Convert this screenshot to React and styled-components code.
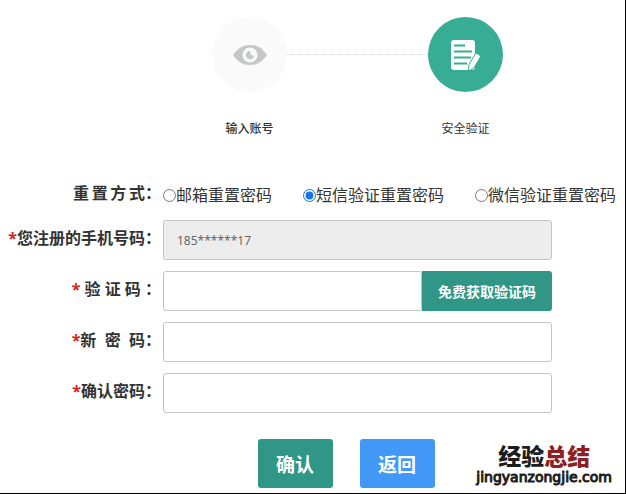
import React, { useState } from "react";
import styled, { createGlobalStyle } from "styled-components";

const GlobalStyle = createGlobalStyle`
  *, *::before, *::after { box-sizing: border-box; }
  body {
    margin: 0;
    background: #fff;
    color: #333;
    font-family: "Noto Sans", "Noto Sans CJK SC", sans-serif;
  }
  button, input { font-family: inherit; }
`;

const Page = styled.main`
  position: relative;
  display: flex;
  flex-direction: column;
  min-height: 100vh;
  padding-top: 17px;
  border-right: 1px solid #000;
  border-bottom: 1px solid #000;
`;

const Steps = styled.ol`
  display: flex;
  align-items: flex-start;
  justify-content: center;
  list-style: none;
  margin: 0;
  padding: 0 122px 0 212px;
`;

const Step = styled.li`
  display: flex;
  flex: none;
  flex-direction: column;
  align-items: center;
  gap: 27px;
  width: 75px;
`;

const StepCircle = styled.span`
  display: grid;
  place-items: center;
  width: 75px;
  height: 75px;
  border-radius: 50%;
  background: ${(p) => (p.$active ? "#38ad95" : "#fafafa")};
`;

const StepLabel = styled.span`
  font-size: 12px;
  line-height: 20px;
  white-space: nowrap;
  font-weight: ${(p) => (p.$strong ? 500 : 400)};
`;

const Connector = styled.li`
  flex: 1;
  height: 38px;
  border-bottom: 1px dotted #dcdcdc;
`;

const Form = styled.form`
  display: flex;
  flex-direction: column;
  gap: 11px;
  margin-top: 42px;
`;

const Row = styled.div`
  display: grid;
  grid-template-columns: 163px minmax(0, 1fr);
  align-items: center;
  padding-right: ${(p) => (p.$wide ? "0" : "73px")};
`;

const Label = styled.label`
  justify-self: end;
  padding: 0 2px 4px 0;
  font-size: 16px;
  line-height: 24px;
  font-weight: 700;
  white-space: pre;
`;

const Star = styled.span`
  color: #e02020;
`;

const Radios = styled.div`
  display: flex;
  align-items: center;
  gap: 31px;
  height: 28px;
`;

const RadioLabel = styled.label`
  display: flex;
  align-items: center;
  font-size: 16px;
  line-height: 28px;
  white-space: nowrap;
`;

const Radio = styled.input`
  flex: none;
  width: 13px;
  height: 13px;
  margin: 0;
  accent-color: #1a73e8;
`;

const TextInput = styled.input`
  width: 100%;
  min-width: 0;
  height: 40px;
  padding: 0 13px;
  border: 1px solid #c4c4c4;
  border-radius: 3px;
  background: ${(p) => (p.readOnly ? "#ededed" : "#fff")};
  color: #666;
  font-size: 12px;
  outline: none;
`;

const CodeGroup = styled.div`
  display: flex;
`;

const CodeButton = styled.button`
  flex: none;
  width: 130px;
  height: 40px;
  padding: 0;
  border: 0;
  border-radius: 0 3px 3px 0;
  background: #309685;
  color: #fff;
  font-size: 14px;
  font-weight: 700;
`;

const Actions = styled.div`
  display: flex;
  justify-content: center;
  gap: 27px;
  margin-top: 15px;
  padding: 0 73px 0 140px;
`;

const ActionButton = styled.button`
  width: 75px;
  height: 49px;
  padding: 0;
  border: 0;
  border-radius: 3px;
  background: ${(p) => (p.$secondary ? "#4298f7" : "#309685")};
  color: #fff;
  font-size: 19px;
  font-weight: 700;
`;

const Watermark = styled.div`
  position: absolute;
  right: 13px;
  bottom: 8px;
  display: flex;
  flex-direction: column;
  align-items: center;
  gap: 1px;
  color: #1d1d1d;
  font-weight: 900;
`;

const WatermarkName = styled.span`
  font-size: 23px;
  line-height: 24px;
`;

const WatermarkAccent = styled.span`
  color: #8d2023;
`;

const WatermarkSite = styled.span`
  font-family: "DejaVu Sans", sans-serif;
  font-size: 14px;
  line-height: 16px;
  font-weight: 400;
  -webkit-text-stroke: 1px currentColor;
`;

const EyeIcon = () => (
  <svg width="34" height="20" viewBox="0 0 34 20" aria-hidden="true">
    <path d="M0 10C5 3 10 0 17 0s12 3 17 10c-5 7-10 10-17 10S5 17 0 10Z" fill="#c4c7ca" />
    <circle cx="17" cy="10" r="7.500" fill="#fafafa" />
    <path d="M17.500 6a4.200 4.200 0 1 0 3.700 4.500A3.200 3.200 0 0 1 17.500 6Z" fill="#c4c7ca" />
  </svg>
);

const NoteIcon = () => (
  <svg width="30" height="30" viewBox="0 0 30 30" aria-hidden="true">
    <rect width="24" height="30" rx="3" fill="#fff" />
    <path d="M3 5.500h11M3 11.500h18M3 17.500h17M3 23.500h13" stroke="#38ad95" strokeWidth="2" />
    <path
      d="M25 13l5 3-7.500 12.500L17.500 31l.5-6.500Z"
      fill="#fff"
      stroke="#38ad95"
      strokeWidth="1"
      strokeLinejoin="round"
    />
  </svg>
);

const METHODS = [
  { id: "email", text: "邮箱重置密码" },
  { id: "sms", text: "短信验证重置密码" },
  { id: "wechat", text: "微信验证重置密码" },
];

export default function App() {
  const [method, setMethod] = useState("sms");

  return (
    <Page>
      <GlobalStyle />
      <Steps>
        <Step>
          <StepCircle>
            <EyeIcon />
          </StepCircle>
          <StepLabel $strong>输入账号</StepLabel>
        </Step>
        <Connector aria-hidden="true" />
        <Step aria-current="step">
          <StepCircle $active>
            <NoteIcon />
          </StepCircle>
          <StepLabel>安全验证</StepLabel>
        </Step>
      </Steps>

      <Form onSubmit={(e) => e.preventDefault()}>
        <Row $wide>
          <Label as="span" id="method-label">
            {"重\u2009置\u2009方\u2009式："}
          </Label>
          <Radios role="radiogroup" aria-labelledby="method-label">
            {METHODS.map((m) => (
              <RadioLabel key={m.id}>
                <Radio
                  type="radio"
                  name="method"
                  checked={method === m.id}
                  onChange={() => setMethod(m.id)}
                />
                {m.text}
              </RadioLabel>
            ))}
          </Radios>
        </Row>
        <Row>
          <Label htmlFor="phone">
            <Star>*</Star>您注册的手机号码：
          </Label>
          <TextInput id="phone" type="text" readOnly value="185******17" />
        </Row>
        <Row>
          <Label htmlFor="code">
            <Star>*</Star>
            {" 验 证 码 ："}
          </Label>
          <CodeGroup>
            <TextInput id="code" type="text" />
            <CodeButton type="button">免费获取验证码</CodeButton>
          </CodeGroup>
        </Row>
        <Row>
          <Label htmlFor="password">
            <Star>*</Star>
            {"新  密  码："}
          </Label>
          <TextInput id="password" type="password" />
        </Row>
        <Row>
          <Label htmlFor="confirm">
            <Star>*</Star>确认密码：
          </Label>
          <TextInput id="confirm" type="password" />
        </Row>
        <Actions>
          <ActionButton type="submit">确认</ActionButton>
          <ActionButton type="button" $secondary>
            返回
          </ActionButton>
        </Actions>
      </Form>

      <Watermark>
        <WatermarkName>
          经验<WatermarkAccent>总结</WatermarkAccent>
        </WatermarkName>
        <WatermarkSite>jingyanzongjie.com</WatermarkSite>
      </Watermark>
    </Page>
  );
}
